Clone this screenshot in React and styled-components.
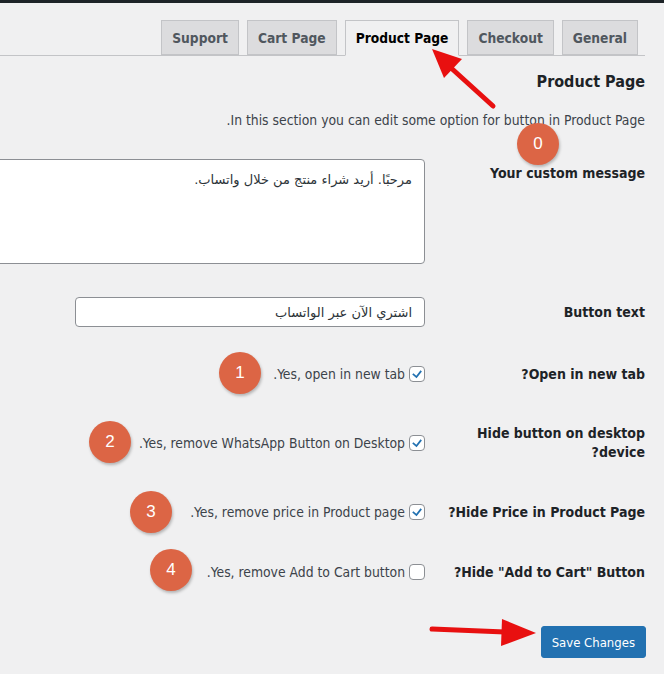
import styled, { createGlobalStyle } from "styled-components"

const GlobalStyle = createGlobalStyle`
html, body {
    margin: 0;
    padding: 0;
    background: #f0f0f1;
    overflow: hidden;
}
body {
    font-family: "DejaVu Sans Condensed", "DejaVu Sans", sans-serif;
    font-stretch: condensed;
    color: #3c434a;
}
`

const tabs = ["General", "Checkout", "Product Page", "Cart Page", "Support"]

const rows = [
    { label: "Open in new tab?", text: "Yes, open in new tab.", checked: true, h: 60 },
    { label: "Hide button on desktop device?", text: "Yes, remove WhatsApp Button on Desktop.", checked: true, h: 78 },
    { label: "Hide Price in Product Page?", text: "Yes, remove price in Product page.", checked: true, h: 60 },
    { label: "Hide \"Add to Cart\" Button?", text: "Yes, remove Add to Cart button.", checked: false, h: 60 },
]

const marks = [
    { n: 0, x: 538, y: 144 },
    { n: 1, x: 240, y: 373 },
    { n: 2, x: 110, y: 442 },
    { n: 3, x: 151, y: 512 },
    { n: 4, x: 171, y: 570 },
]

function Check({ checked }) {
    return (
        <Box>
            {checked && (
                <svg width="16" height="16" viewBox="0 0 20 20">
                    <path d="M15 4.8l2 1.5-7.6 9.6-6.2-5.1 1.6-1.9 4.2 3.5z" fill="#2271b1" />
                </svg>
            )}
        </Box>
    )
}

function CheckRow({ label, text, checked, h }) {
    return (
        <Row $h={h}>
            <Label>{label}</Label>
            <Field>
                <CheckLabel>
                    <Check checked={checked} />
                    <span>{text}</span>
                </CheckLabel>
            </Field>
        </Row>
    )
}

export default function App() {
    return (
        <>
            <GlobalStyle />
            <Page dir="rtl">
                <TopBar />
                <Wrap>
                    <TabBar>
                        {tabs.map((t) => (
                            <Tab key={t} $active={t === "Product Page"}>{t}</Tab>
                        ))}
                    </TabBar>
                    <Heading>Product Page</Heading>
                    <Desc>In this section you can edit some option for button in Product Page.</Desc>

                    <Row $top>
                        <Label $pt={5}>Your custom message</Label>
                        <Field>
                            <TextArea defaultValue="مرحبًا. أريد شراء منتج من خلال واتساب." />
                        </Field>
                    </Row>
                    <Row $h={64}>
                        <Label>Button text</Label>
                        <Field>
                            <TextInput defaultValue="اشتري الآن عبر الواتساب" />
                        </Field>
                    </Row>
                    {rows.map((r) => (
                        <CheckRow key={r.label} {...r} />
                    ))}
                    <Footer>
                        <SaveButton>Save Changes</SaveButton>
                    </Footer>
                </Wrap>

                <Arrows width="664" height="674" viewBox="0 0 664 674">
                    <line x1="493" y1="106" x2="450" y2="67" stroke="#e81010" strokeWidth="5" strokeLinecap="round" />
                    <polygon points="432,49 462,59 444,78" fill="#e81010" />
                    <line x1="432" y1="629" x2="505" y2="632" stroke="#e81010" strokeWidth="5" strokeLinecap="round" />
                    <polygon points="536,633 502,619 501,646" fill="#e81010" />
                </Arrows>
                {marks.map((m) => (
                    <Mark key={m.n} $x={m.x} $y={m.y}>{m.n}</Mark>
                ))}
            </Page>
        </>
    )
}

const Page = styled.div`
position: relative;
width: 664px;
height: 674px;
overflow: hidden;
`

const TopBar = styled.div`
height: 3px;
background: #1d2327;
`

const Wrap = styled.div`
padding: 17px 19px 0 0;
`

const TabBar = styled.div`
display: flex;
gap: 8px;
padding-right: 7px;
border-bottom: 1px solid #c3c4c7;
height: 35px;
align-items: flex-end;
`

const Tab = styled.div`
box-sizing: border-box;
height: ${(p) => (p.$active ? "36px" : "35px")};
margin-bottom: ${(p) => (p.$active ? "-1px" : "0")};
padding: 5px 10px;
border: 1px solid #c3c4c7;
border-bottom-color: ${(p) => (p.$active ? "#f0f0f1" : "#c3c4c7")};
background: ${(p) => (p.$active ? "#f0f0f1" : "#dcdcde")};
color: ${(p) => (p.$active ? "#000" : "#50575e")};
font-size: 13.7px;
font-weight: bold;
line-height: 24px;
white-space: nowrap;
`

const Heading = styled.h2`
margin: 16px 0 0;
font-size: 16px;
line-height: 20px;
color: #1d2327;
font-weight: bold;
`

const Desc = styled.p`
margin: 19px 0 15px;
font-size: 13.8px;
line-height: 18px;
color: #3c434a;
`

const Row = styled.div`
display: flex;
align-items: ${(p) => (p.$top ? "flex-start" : "center")};
height: ${(p) => (p.$h ? `${p.$h}px` : "auto")};
padding: ${(p) => (p.$top ? "15px 0 16px" : "0")};
`

const Label = styled.div`
box-sizing: border-box;
width: 220px;
flex: none;
padding: ${(p) => p.$pt || 0}px 0 0 20px;
font-size: 14px;
font-weight: bold;
line-height: 19px;
color: #1d2327;
`

const Field = styled.div`
flex: 1;
display: flex;
`

const TextArea = styled.textarea`
box-sizing: border-box;
width: 470px;
flex: none;
height: 105px;
padding: 10px 12px;
border: 1px solid #8c8f94;
border-radius: 4px;
background: #fff;
font-family: "DejaVu Sans", sans-serif;
font-size: 13px;
line-height: 20px;
color: #2c3338;
resize: none;
outline: none;
`

const TextInput = styled.input`
box-sizing: border-box;
width: 350px;
height: 30px;
padding: 0 12px;
border: 1px solid #8c8f94;
border-radius: 4px;
background: #fff;
font-family: "DejaVu Sans", sans-serif;
font-size: 13px;
color: #2c3338;
outline: none;
`

const CheckLabel = styled.label`
display: flex;
align-items: center;
gap: 4px;
font-size: 13.8px;
line-height: 18px;
color: #3c434a;
`

const Box = styled.span`
box-sizing: border-box;
width: 16px;
height: 16px;
border: 1px solid #8c8f94;
border-radius: 4px;
background: #fff;
display: flex;
align-items: center;
justify-content: center;
`

const Footer = styled.div`
padding-top: 24px;
`

const SaveButton = styled.button`
height: 32px;
padding: 0 10px;
margin-right: -1px;
border: 1px solid #2271b1;
border-radius: 3px;
background: #2271b1;
color: #fff;
font-family: "DejaVu Sans Condensed", "DejaVu Sans", sans-serif;
font-stretch: condensed;
font-size: 13px;
`

const Arrows = styled.svg`
position: absolute;
left: 0;
top: 0;
pointer-events: none;
`

const Mark = styled.div`
position: absolute;
left: ${(p) => p.$x - 21}px;
top: ${(p) => p.$y - 21}px;
width: 42px;
height: 42px;
border-radius: 50%;
background: #dc6545;
box-shadow: 1px 2px 3px rgba(0, 0, 0, 0.25);
color: #fff;
font-family: "Liberation Sans", Arial, sans-serif;
font-size: 17px;
display: flex;
align-items: center;
justify-content: center;
`
